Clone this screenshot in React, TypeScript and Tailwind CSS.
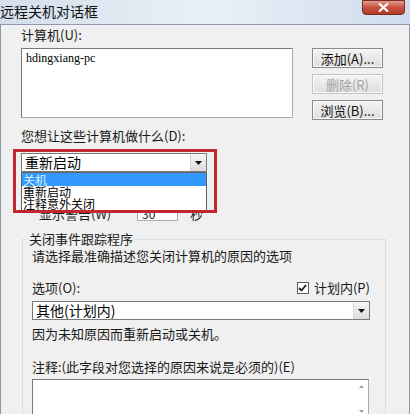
import React from 'react';

const cjk = "font-['Noto_Sans_CJK_SC','Noto_Sans',sans-serif]";

function ComboArrow() {
  return (
    <div className="flex h-full w-[16px] items-center justify-center border-l border-[#d6d6d6] bg-gradient-to-b from-[#f6f6f6] to-[#dcdcdc]">
      <svg width="7" height="4" viewBox="0 0 7 4">
        <path d="M0 0h7L3.5 4z" fill="#111" />
      </svg>
    </div>
  );
}

function WinButton({ label, disabled }: { label: string; disabled?: boolean }) {
  return (
    <div
      className={`flex h-[20px] w-[71px] items-center justify-center border border-[#8a8a8a] bg-gradient-to-b from-[#f4f4f4] to-[#dedede] text-[13px] leading-none shadow-[inset_0_0_0_1px_#fafafa] ${
        disabled ? 'border-[#c4c4c4] text-[#a3a3a3]' : 'text-[#111]'
      }`}
    >
      {label}
    </div>
  );
}

export default function App() {
  return (
    <div className={`relative flex h-[414px] w-[410px] flex-col overflow-hidden bg-[#d7e3f0] ${cjk}`}>
      {/* title bar */}
      <div className="flex h-[24px] shrink-0 items-start justify-between bg-gradient-to-r from-[#d3dfec] via-[#e9f0f7] to-[#d0dced]">
        <span className="pt-[3px] text-[14px] leading-[17px] text-[#111]">远程关机对话框</span>
        <div className="mr-[5px] flex h-[15px] w-[43px] items-center justify-center rounded-b-[4px] border border-[#7a2a22] bg-gradient-to-b from-[#e09a8e] via-[#c9503e] to-[#b33b2a]">
          <svg width="11" height="9" viewBox="0 0 11 9">
            <path d="M1 0.5l9 8M10 0.5l-9 8" stroke="#fff" strokeWidth="2.2" />
          </svg>
        </div>
      </div>

      {/* window body */}
      <div className="flex flex-1 flex-col border-l border-t border-r border-[#8d9aab] bg-[#f0f0f0] pl-[20px] pr-[3px] text-[13px] text-[#1a1a1a]">
        <div className="mt-[3px] leading-[14px]">计算机(U):</div>

        <div className="mt-[6px] flex items-start">
          <div className="h-[70px] w-[272px] border border-[#abadb3] border-l-[#7a7a7a] border-t-[#7a7a7a] bg-white px-[4px] pt-[2px] font-['Liberation_Serif',serif] text-[12px] leading-[14px] text-black">
            hdingxiang-pc
          </div>
          <div className="ml-[19px] flex flex-col gap-[6px]">
            <WinButton label="添加(A)..." />
            <WinButton label="删除(R)" disabled />
            <WinButton label="浏览(B)..." />
          </div>
        </div>

        <div className="mt-[9px] leading-[14px]">您想让这些计算机做什么(D):</div>

        {/* action select with its list opened */}
        <div className="relative mt-[10px] w-[186px]">
          <div className="flex h-[19px] items-stretch border border-[#7a7a7a] bg-white">
            <span className="flex-1 pl-[3px] text-[14px] leading-[17px] text-black">重新启动</span>
            <ComboArrow />
          </div>
          <div className="absolute left-0 top-[19px] z-10 flex w-[186px] flex-col border border-[#646464] bg-white text-[12px] text-black">
            <span className="bg-[#3399ff] pl-[1px] leading-[13px] text-[#d8f0ff]">关机</span>
            <span className="pl-[1px] leading-[12px]">重新启动</span>
            <span className="pl-[1px] leading-[12px]">注释意外关闭</span>
          </div>
          <div className="pointer-events-none absolute left-[-8px] top-[-4px] z-20 h-[64px] w-[204px] border-[3px] border-[#c1272d]" />
        </div>

        {/* warning row, mostly hidden under the list */}
        <div className="mt-[34px] flex h-[15px] items-center">
          <span className="ml-[18px] w-[98px] leading-[14px]">显示警告(W)</span>
          <div className="h-[15px] w-[41px] border border-[#abadb3] bg-white pl-[4px] text-[12px] leading-[13px]">30</div>
          <span className="ml-[12px] leading-[14px]">秒</span>
        </div>

        {/* group box */}
        <div className="relative mt-[18px] ml-[1px] w-[364px] flex-1 border border-b-0 border-[#d5dfe5] pl-[9px]">
          <span className="absolute left-[5px] top-[-8px] bg-[#f0f0f0] px-[1px] text-[13px] leading-[14px]">关闭事件跟踪程序</span>
          <div className="mt-[9px] leading-[14px]">请选择最准确描述您关闭计算机的原因的选项</div>

          <div className="mt-[18px] flex items-center justify-between pr-[15px] leading-[14px]">
            <span>选项(O):</span>
            <span className="flex items-center gap-[5px]">
              <span className="flex h-[12px] w-[12px] items-center justify-center border border-[#5c5c5c] bg-white">
                <svg width="9" height="8" viewBox="0 0 9 8">
                  <path d="M1 4l2.5 2.5L8 1" stroke="#1d1d1d" strokeWidth="1.8" fill="none" />
                </svg>
              </span>
              计划内(P)
            </span>
          </div>

          <div className="mt-[6px] flex h-[19px] w-[338px] items-stretch border border-[#7a7a7a] bg-white">
            <span className="flex-1 pl-[3px] text-[14px] leading-[17px] text-black">其他(计划内)</span>
            <ComboArrow />
          </div>

          <div className="mt-[7px] leading-[14px]">因为未知原因而重新启动或关机。</div>

          <div className="mt-[19px] leading-[14px]">注释:(此字段对您选择的原因来说是必须的)(E)</div>

          <div className="mt-[5px] flex h-[40px] w-[337px] border border-[#abadb3] border-l-[#7a7a7a] border-t-[#7a7a7a] bg-white">
            <div className="flex-1" />
            <div className="flex w-[14px] flex-col items-center justify-between py-[5px]">
              <svg width="5" height="3" viewBox="0 0 5 3"><path d="M0 3h5L2.5 0z" fill="#a0a0a0" /></svg>
              <svg width="5" height="3" viewBox="0 0 5 3"><path d="M0 0h5L2.5 3z" fill="#a0a0a0" /></svg>
            </div>
          </div>
        </div>
      </div>
    </div>
  );
}
